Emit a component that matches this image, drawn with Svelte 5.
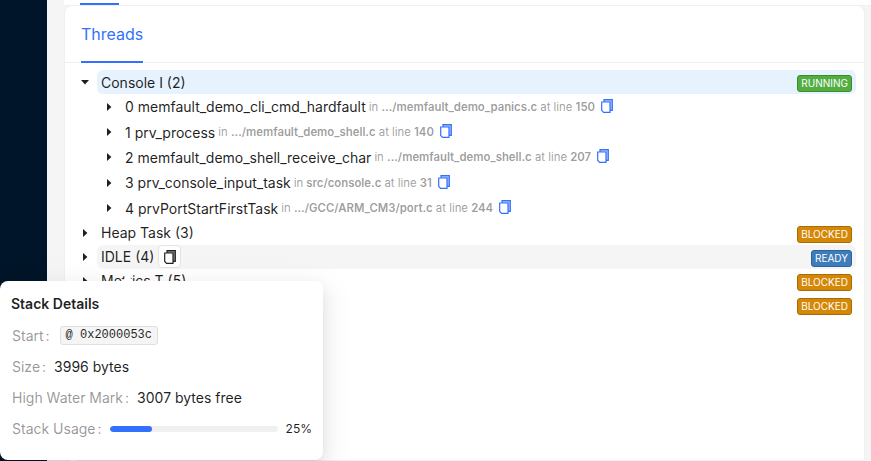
<script>
    const frames = [
        { n: 0, name: "memfault_demo_cli_cmd_hardfault", file: ".../memfault_demo_panics.c", line: 150 },
        { n: 1, name: "prv_process", file: ".../memfault_demo_shell.c", line: 140 },
        { n: 2, name: "memfault_demo_shell_receive_char", file: ".../memfault_demo_shell.c", line: 207 },
        { n: 3, name: "prv_console_input_task", file: "src/console.c", line: 31 },
        { n: 4, name: "prvPortStartFirstTask", file: ".../GCC/ARM_CM3/port.c", line: 244 },
    ];
    const threads = [
        { label: "Heap Task (3)", state: "BLOCKED" },
        { label: "IDLE (4)", state: "READY", hover: true },
        { label: "Metrics T (5)", state: "BLOCKED" },
        { label: "Logging (6)", state: "BLOCKED" },
    ];
</script>

<div class="page">
    <aside class="sidebar"></aside>
    <main class="content">
        <div class="topTabs"><span class="topInk"></span></div>
        <section class="card">
            <header class="cardHead">
                <span class="tab">Threads</span>
            </header>
            <div class="tree">
                <div class="row">
                    <svg class="caret" viewBox="0 0 8 8"><path d="M0 2h8L4 6.4z" /></svg>
                    <div class="title active">
                        <span>Console I (2)</span>
                        <span class="badge running">RUNNING</span>
                    </div>
                </div>
                {#each frames as f}
                    <div class="row frame">
                        <svg class="caret" viewBox="0 0 8 8"><path d="M2 0v8l4.4-4z" /></svg>
                        <span class="fn">{f.n} {f.name}</span>
                        <span class="meta">in <b>{f.file}</b> at line <b>{f.line}</b></span>
                        <svg class="copy" viewBox="0 0 12 14">
                            <path class="copyBack" d="M3 .7h8.3v10.6H9V3H3z" />
                            <path class="copyLine" d="M3 2.4V.7h8.3v10.6H9M.7 3H9v10.3H2.6L.7 11.4z" />
                        </svg>
                    </div>
                {/each}
                {#each threads as t}
                    <div class="row">
                        <svg class="caret" viewBox="0 0 8 8"><path d="M2 0v8l4.4-4z" /></svg>
                        <div class="title" class:hover={t.hover}>
                            <span class="label">{t.label}
                                {#if t.hover}
                                    <span class="copyBtn">
                                        <svg viewBox="0 0 12 14">
                                            <path class="darkBack" d="M3 .7h8.3v10.6H9V3H3z" />
                                            <path class="darkLine" d="M3 2.4V.7h8.3v10.6H9M.7 3H9v10.3H2.6L.7 11.4z" />
                                        </svg>
                                    </span>
                                {/if}
                            </span>
                            <span class="badge" class:blocked={t.state === "BLOCKED"} class:ready={t.state === "READY"}>{t.state}</span>
                        </div>
                    </div>
                {/each}
            </div>
        </section>
        <div class="nextCard"></div>
    </main>

    <div class="popover">
        <h3>Stack Details</h3>
        <div class="item">
            <span class="key">Start<i>:</i></span>
            <code>@ 0x2000053c</code>
        </div>
        <div class="item">
            <span class="key">Size<i>:</i></span>
            <span>3996 bytes</span>
        </div>
        <div class="item">
            <span class="key">High Water Mark<i>:</i></span>
            <span>3007 bytes free</span>
        </div>
        <div class="item">
            <span class="key">Stack Usage<i>:</i></span>
            <div class="usage">
                <div class="track"><div class="fill" style="width: 25%"></div></div>
                <span class="pct">25%</span>
            </div>
        </div>
    </div>
</div>

<style>
    :global(body) {
        margin: 0;
        background: #f5f5f5;
    }

    .page {
        position: relative;
        display: flex;
        width: 871px;
        height: 461px;
        overflow: hidden;
        background: #f5f5f5;
        color: rgba(0, 0, 0, 0.88);
        font-family: Inter, "Liberation Sans", sans-serif;
        font-size: 14px;
    }

    .sidebar {
        flex: 0 0 47px;
        background: #001529;
    }

    .content {
        flex: 1;
        display: flex;
        flex-wrap: wrap;
        align-content: flex-start;
        padding-left: 17px;
        min-width: 0;
    }

    .topTabs {
        flex: 0 0 100%;
        height: 6px;
        background: #fff;
        border-bottom: 1px solid #f0f0f0;
        box-sizing: border-box;
        padding-left: 16px;
    }

    .topInk {
        display: block;
        width: 39px;
        height: 2px;
        margin-top: 3px;
        background: #3370ff;
    }

    .card {
        flex: 0 0 801px;
        height: 456px;
        margin-top: -1px;
        box-sizing: border-box;
        background: #fff;
        border: 1px solid #f0f0f0;
        border-radius: 8px 8px 0 0;
    }

    .nextCard {
        flex: 0 0 6px;
        height: 456px;
        margin-top: -1px;
        margin-left: 5px;
        background: #fff;
        border-left: 1px solid #f0f0f0;
        box-sizing: border-box;
    }

    .cardHead {
        height: 56px;
        padding-left: 16px;
        border-bottom: 1px solid #f0f0f0;
    }

    .tab {
        display: inline-block;
        height: 55px;
        line-height: 56px;
        font-size: 16px;
        color: #3370ff;
        border-bottom: 2px solid #3370ff;
    }

    .tree {
        padding: 7px 8px 0 16px;
    }

    .row {
        display: flex;
        align-items: center;
        height: 24px;
    }

    .caret {
        flex: none;
        width: 8px;
        height: 8px;
        margin-right: 8px;
        fill: rgba(0, 0, 0, 0.88);
    }

    .frame {
        height: 25.4px;
        padding-left: 24px;
    }

    .frame .caret {
        margin-right: 12px;
    }

    .title {
        flex: 1;
        display: flex;
        align-items: center;
        justify-content: space-between;
        height: 24px;
        padding: 0 4px;
        border-radius: 6px;
    }

    .active {
        background: #e6f2fd;
    }

    .hover {
        background: #f5f5f5;
    }

    .label {
        display: flex;
        align-items: center;
        gap: 4px;
    }

    .fn {
        white-space: nowrap;
    }

    .meta {
        margin-left: 3px;
        font-size: 11.35px;
        color: rgba(0, 0, 0, 0.4);
        white-space: nowrap;
    }

    .meta b {
        font-weight: 600;
    }

    .copy {
        width: 12px;
        height: 14px;
        margin-left: 6px;
        margin-top: -2px;
    }

    .copyBack {
        fill: #a5bffb;
    }

    .copyLine {
        fill: none;
        stroke: #3370ff;
        stroke-width: 1.2;
    }

    .copyBtn {
        display: inline-flex;
        align-items: center;
        justify-content: center;
        width: 23px;
        height: 23px;
        box-sizing: border-box;
        border: 1px solid #e4e4e4;
        border-radius: 4px;
        background: #fff;
    }

    .copyBtn svg {
        width: 12px;
        height: 14px;
    }

    .darkBack {
        fill: #888;
    }

    .darkLine {
        fill: none;
        stroke: #222;
        stroke-width: 1.2;
    }

    .badge {
        box-sizing: border-box;
        height: 17px;
        line-height: 15px;
        margin-top: 3px;
        padding: 0 3px;
        font-size: 10px;
        color: #fff;
        border: 1px solid;
        border-radius: 3px;
    }

    .running {
        background: #52ae3f;
        border-color: #3f8a30;
    }

    .blocked {
        background: #d48806;
        border-color: #a66c0c;
    }

    .ready {
        background: #3f7cbb;
        border-color: #2f639a;
    }

    .popover {
        position: absolute;
        left: 0;
        top: 281px;
        width: 323px;
        height: 179px;
        box-sizing: border-box;
        padding: 14px 11px 0;
        background: #fff;
        border-radius: 8px;
        box-shadow: 0 6px 16px rgba(0, 0, 0, 0.08), 0 3px 6px -4px rgba(0, 0, 0, 0.12), 0 9px 28px 8px rgba(0, 0, 0, 0.05);
    }

    .popover::before {
        content: "";
        position: absolute;
        left: 123px;
        top: -4px;
        width: 9px;
        height: 9px;
        background: #fff;
        transform: rotate(45deg);
    }

    h3 {
        margin: 0 0 8px;
        font-size: 14px;
        line-height: 17px;
        font-weight: 600;
    }

    .item {
        display: flex;
        align-items: center;
        height: 31px;
    }

    .key {
        flex: none;
        margin-left: 1px;
        margin-right: 8px;
        color: rgba(0, 0, 0, 0.42);
    }

    .key i {
        margin-left: 2px;
        font-style: normal;
    }

    code {
        margin-left: 2px;
        padding: 1px 5px;
        font-family: "Liberation Mono", monospace;
        font-size: 12px;
        line-height: 15px;
        background: #f5f5f5;
        border: 1px solid #dfdfdf;
        border-radius: 3px;
    }

    .usage {
        flex: 1;
        display: flex;
        align-items: center;
        gap: 8px;
    }

    .track {
        flex: 1;
        height: 6px;
        background: #f0f0f0;
        border-radius: 3px;
        overflow: hidden;
    }

    .fill {
        height: 100%;
        background: #3370ff;
        border-radius: 3px;
    }

    .pct {
        font-size: 12px;
    }
</style>
